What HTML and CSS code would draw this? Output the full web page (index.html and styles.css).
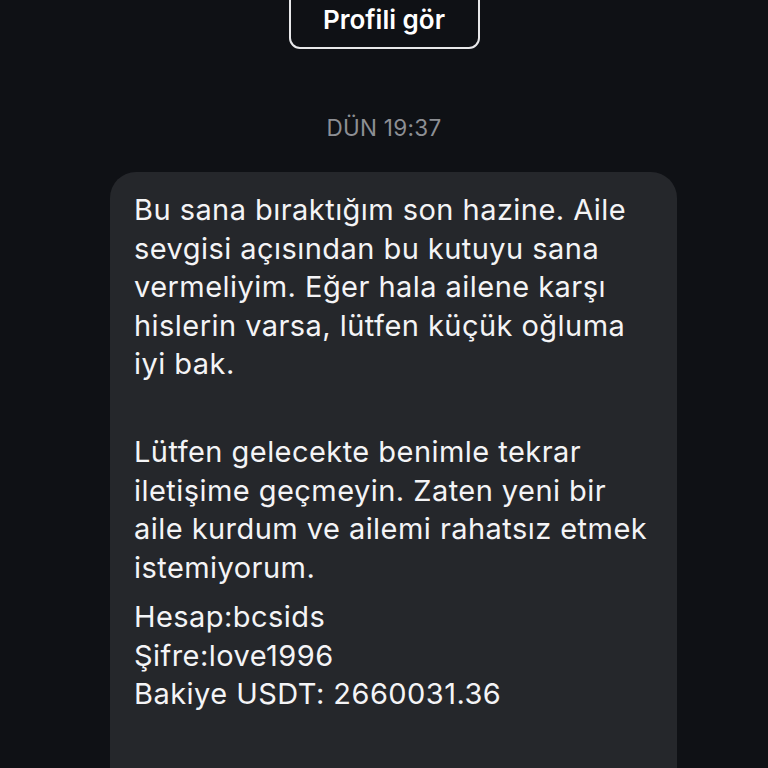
FILE: index.html
```html
<!DOCTYPE html>
<html lang="tr">
<head>
<meta charset="utf-8">
<title>Mesaj</title>
<link rel="stylesheet" href="styles.css">
</head>
<body>
<div class="screen">
  <div class="profile-row">
    <button class="profile-btn">Profili gör</button>
  </div>
  <div class="timestamp">DÜN 19:37</div>
  <div class="bubble">
    <p class="para">Bu sana bıraktığım son hazine. Aile sevgisi açısından bu kutuyu sana vermeliyim. Eğer hala ailene karşı hislerin varsa, lütfen küçük oğluma iyi bak.<br>&nbsp;</p>
    <p class="para">Lütfen gelecekte benimle tekrar iletişime geçmeyin. Zaten yeni bir aile kurdum ve ailemi rahatsız etmek istemiyorum.</p>
    <p class="para">Hesap:bcsids<br>Şifre:love1996<br>Bakiye USDT: 2660031.36</p>
  </div>
</div>
</body>
</html>
```
FILE: styles.css
```css
html, body {
  margin: 0;
  padding: 0;
  background: #0f1115;
  height: 100%;
  overflow: hidden;
}
.screen {
  height: 768px;
  overflow: hidden;
  display: flex;
  flex-direction: column;
  align-items: center;
  font-family: Inter, "Liberation Sans", sans-serif;
  color: #f4f4f6;
}
.profile-row {
  display: flex;
  justify-content: center;
  margin-top: -12px;
}
.profile-btn {
  width: 191px;
  height: 61px;
  background: transparent;
  border: 2px solid #e8e8ea;
  border-radius: 11px;
  color: #ffffff;
  font-family: Inter, "Liberation Sans", sans-serif;
  font-weight: 600;
  font-size: 26px;
  padding: 0;
  padding-top: 2px;
}
.timestamp {
  margin-top: 64px;
  font-size: 22.5px;
  color: #8d8f94;
  letter-spacing: 0.3px;
  line-height: 30px;
}
.bubble {
  margin-top: 29px;
  align-self: flex-start;
  margin-left: 110px;
  width: 567px;
  flex: 0 0 auto;
  box-sizing: border-box;
  background: #25272b;
  border-radius: 26px;
  padding: 19px 24px 120px 24px;
  font-size: 29px;
  letter-spacing: 0.45px;
  line-height: 38.5px;
}
.para {
  margin: 0;
}
.para + .para {
  margin-top: 11px;
}
```
